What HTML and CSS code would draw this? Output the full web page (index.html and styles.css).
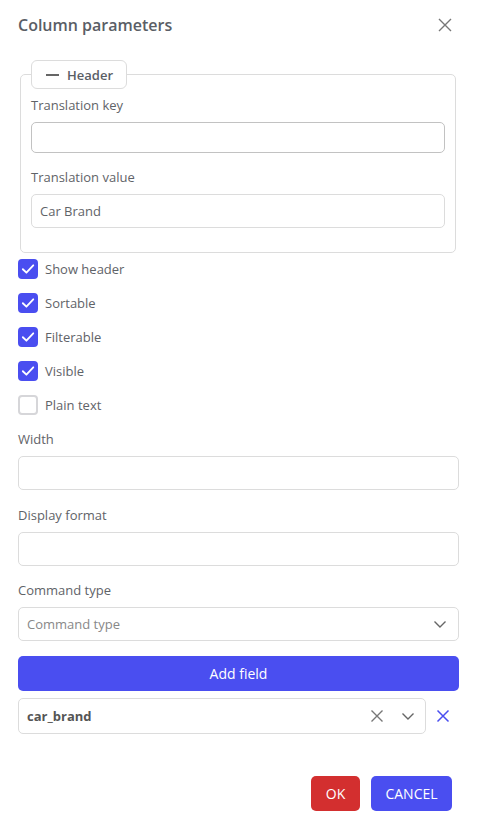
FILE: index.html
```html
<!DOCTYPE html>
<html>
<head>
<meta charset="utf-8">
<link rel="stylesheet" href="styles.css">
</head>
<body>
<div class="dialog">
  <div class="header">
    <div class="title">Column parameters</div>
    <svg class="close" width="14" height="14" viewBox="0 0 14 14"><path d="M1 1L13 13M13 1L1 13" stroke="#777" stroke-width="1.4" fill="none"/></svg>
  </div>
  <fieldset class="group">
    <legend class="legend"><span class="dash"></span>Header</legend>
    <div class="label first">Translation key</div>
    <div class="input short focus"></div>
    <div class="label">Translation value</div>
    <div class="input inner">Car Brand</div>
  </fieldset>
  <div class="checks">
    <div class="check"><span class="box on"><svg width="16" height="16" viewBox="0 0 14 14"><path d="M2.5 7.2L5.6 10.2L11.6 3.8" stroke="#fff" stroke-width="1.6" fill="none" stroke-linecap="round" stroke-linejoin="round"/></svg></span>Show header</div>
    <div class="check"><span class="box on"><svg width="16" height="16" viewBox="0 0 14 14"><path d="M2.5 7.2L5.6 10.2L11.6 3.8" stroke="#fff" stroke-width="1.6" fill="none" stroke-linecap="round" stroke-linejoin="round"/></svg></span>Sortable</div>
    <div class="check"><span class="box on"><svg width="16" height="16" viewBox="0 0 14 14"><path d="M2.5 7.2L5.6 10.2L11.6 3.8" stroke="#fff" stroke-width="1.6" fill="none" stroke-linecap="round" stroke-linejoin="round"/></svg></span>Filterable</div>
    <div class="check"><span class="box on"><svg width="16" height="16" viewBox="0 0 14 14"><path d="M2.5 7.2L5.6 10.2L11.6 3.8" stroke="#fff" stroke-width="1.6" fill="none" stroke-linecap="round" stroke-linejoin="round"/></svg></span>Visible</div>
    <div class="check"><span class="box"></span>Plain text</div>
  </div>
  <div class="label section first-section">Width</div>
  <div class="input"></div>
  <div class="label section">Display format</div>
  <div class="input"></div>
  <div class="label section cmd">Command type</div>
  <div class="input select"><span class="placeholder">Command type</span>
    <svg width="14" height="14" viewBox="0 0 14 14"><path d="M1.5 4.5L7 10L12.5 4.5" stroke="#666" stroke-width="1.4" fill="none"/></svg>
  </div>
  <button class="add">Add field</button>
  <div class="field-row">
    <div class="input select tall"><span class="value">car_brand</span>
      <span class="icons">
        <svg width="14" height="14" viewBox="0 0 14 14"><path d="M1.5 1.5L12.5 12.5M12.5 1.5L1.5 12.5" stroke="#777" stroke-width="1.4" fill="none"/></svg>
        <svg width="14" height="14" viewBox="0 0 14 14"><path d="M1.5 4.5L7 10L12.5 4.5" stroke="#666" stroke-width="1.4" fill="none"/></svg>
      </span>
    </div>
    <svg class="remove" width="14" height="14" viewBox="0 0 14 14"><path d="M1.5 1.5L12.5 12.5M12.5 1.5L1.5 12.5" stroke="#4a4ef0" stroke-width="1.5" fill="none"/></svg>
  </div>
  <div class="actions">
    <button class="btn ok">OK</button>
    <button class="btn cancel">CANCEL</button>
  </div>
</div>
</body>
</html>
```
FILE: styles.css
```css
* { box-sizing: border-box; }
body {
  margin: 0;
  background: #fff;
  font-family: "Open Sans", "Noto Sans", sans-serif;
  font-size: 13px;
  color: #5f6368;
}
.dialog {
  padding: 12px 19px 0 18px;
  display: flex;
  flex-direction: column;
}
.header {
  display: flex;
  justify-content: space-between;
  align-items: center;
  height: 26px;
  margin-bottom: 22px;
}
.title {
  font-size: 16px;
  font-weight: 600;
  color: #5a5e66;
}
.close { margin-right: 7px; }
.group {
  margin: 0 3px 0 2px;
  padding: 0 10px 24px 10px;
  border: 1px solid #dcdcdc;
  border-radius: 5px;
  display: flex;
  flex-direction: column;
  min-width: 0;
}
.legend {
  border: 1px solid #dcdcdc;
  border-radius: 6px;
  height: 29px;
  padding: 0 13px 0 14px;
  display: flex;
  align-items: center;
  font-weight: 600;
  color: #5a5e66;
  margin-left: 0;
}
.dash {
  display: inline-block;
  width: 13px;
  height: 2px;
  background: #666;
  margin-right: 8px;
}
.label {
  line-height: 20px;
  height: 20px;
  margin-top: 14px;
  margin-bottom: 7px;
}
.label.first { margin-top: 6px; }
.input {
  height: 34px;
  border: 1px solid #dcdcdc;
  border-radius: 5px;
  display: flex;
  align-items: center;
  padding: 0 8px;
  color: #5f6368;
  flex-shrink: 0;
}
.input.short { height: 31px; }
.input.focus { border-color: #c2c2c2; }
.checks {
  display: flex;
  flex-direction: column;
  gap: 14px;
  margin-top: 6px;
}
.check {
  display: flex;
  align-items: center;
  height: 20px;
  line-height: 20px;
}
.box {
  width: 20px;
  height: 20px;
  border-radius: 4px;
  border: 2px solid #d6d6d9;
  margin-right: 7px;
  display: flex;
  align-items: center;
  justify-content: center;
}
.box.on {
  background: #4a4ef0;
  border-color: #4a4ef0;
}
.section { margin-top: 15px; margin-bottom: 7px; }
.first-section { margin-top: 14px; }
.section.cmd { margin-top: 14px; }
.select {
  justify-content: space-between;
  padding-right: 11px;
}
.placeholder { color: #888; }
.add {
  margin-top: 15px;
  height: 35px;
  border: none;
  border-radius: 5px;
  background: #4a4ef0;
  color: #fff;
  font-family: inherit;
  font-size: 14px;
  flex-shrink: 0;
}
.field-row {
  display: flex;
  align-items: center;
  margin-top: 7px;
  gap: 9px;
}
.field-row .select { flex: 0 0 408px; }
.tall { height: 36px; }
.value { font-weight: 700; color: #555; }
.icons { display: flex; gap: 17px; align-items: center; margin-right: -1px; }
.remove { margin-left: 1px; }
.actions {
  display: flex;
  justify-content: flex-end;
  gap: 11px;
  margin-top: 42px;
  margin-right: 7px;
}
.btn {
  height: 35px;
  border: none;
  border-radius: 5px;
  color: #fff;
  font-family: inherit;
  font-size: 14px;
}
.ok { background: #d32f2f; width: 49px; padding: 0; }
.cancel { background: #4a4ef0; width: 81px; padding: 0; }
```
